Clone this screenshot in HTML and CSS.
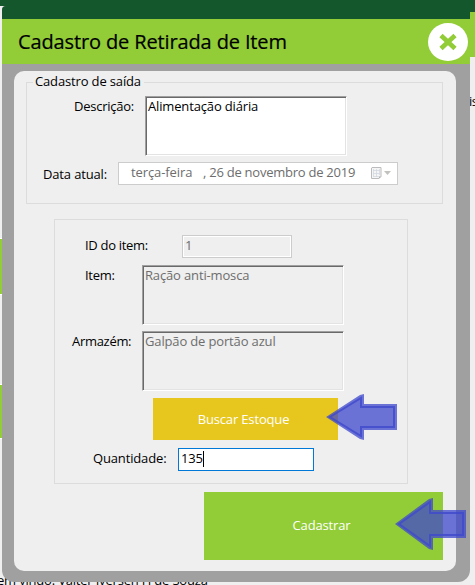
FILE: index.html
```
<!DOCTYPE html>
<html lang="pt-BR">
<head>
<meta charset="utf-8">
<title>Cadastro de Retirada de Item</title>
<link rel="stylesheet" href="styles.css">
</head>
<body>
<div class="backdrop">
  <div class="top-strip"></div>
  <div class="side-bar"></div>
  <div class="edge first"></div>
  <div class="edge second"></div>
  <span class="cut-text">is</span>
  <span class="welcome">em vindo: Valter Iversen H de Souza</span>
</div>
<main class="dialog">
  <div class="frame-top"></div>
  <header class="titlebar">
    <h1>Cadastro de Retirada de Item</h1>
    <svg class="close" viewBox="0 0 40 38"><ellipse cx="20" cy="19" rx="20" ry="19" fill="#fff"/><path d="M13 12.5 27 25.5M27 12.5 13 25.5" stroke="#92cc36" stroke-width="4.6"/></svg>
  </header>
  <section class="panel">
    <div class="group exit">
      <div class="legend">Cadastro de saída</div>
      <div class="row description"><label>Descrição:</label><div class="area white">Alimentação diária</div></div>
      <div class="row date"><label>Data atual:</label>
        <div class="picker"><span class="weekday">terça-feira</span><span class="day">, 26 de novembro de 2019</span>
          <svg class="calendar" width="22" height="13" viewBox="0 0 22 13"><path d="M1 .5h9v9l-2 2H.5V1z" fill="#f5f5f6" stroke="#bcbcbe"/><path d="M2 3.5h7M2 6.5h7M2 9.5h6M2.5 2v8M5.5 2v8M8.5 2v6" stroke="#d3d8e1" stroke-width=".8"/><path d="M8 11.5v-2h2z" fill="#aaa"/><path d="M13 4h7l-3.5 4z" fill="#c2c2bf"/></svg>
        </div>
      </div>
    </div>
    <div class="group stock">
      <div class="row id"><label>ID do item:</label><div class="input disabled">1</div></div>
      <div class="row item"><label>Item:</label><div class="area">Ração anti-mosca</div></div>
      <div class="row store"><label>Armazém:</label><div class="area">Galpão de portão azul</div></div>
      <button class="search">Buscar Estoque</button>
      <div class="row quantity"><label>Quantidade:</label><div class="input focused"><span>135</span><i class="caret"></i></div></div>
    </div>
    <button class="submit">Cadastrar</button>
  </section>
</main>
<svg class="arrow arrow-search" width="71" height="46" viewBox="0 0 71 46"><path class="fill" d="M0 23 34 1 38 0V10H71V36H38V46L34 45Z"/><path class="line" d="M4 23 35 4V13H68V33H35V42Z"/></svg>
<svg class="arrow arrow-submit" width="71" height="52" viewBox="0 0 71 52"><path class="fill" d="M0 26 34 1 38 0V12H71V40H38V52L34 51Z"/><path class="line" d="M4 26 35 4V15H68V37H35V48Z"/></svg>
</body>
</html>
```
FILE: styles.css
```
* { box-sizing: border-box; }
body { margin: 0; width: 475px; height: 585px; overflow: hidden; position: relative; background: #efefef; font: 13px/18px "Open Sans", "Noto Sans", sans-serif; letter-spacing: -.15px; color: #000; }
.backdrop { position: absolute; inset: 0; overflow: hidden; }
.top-strip { position: absolute; left: 0; top: 0; width: 475px; height: 12px; background: linear-gradient(#14572d, #14572d) 0 0 / 100% 6px no-repeat, linear-gradient(#14572d, #14572d) 100% 0 / 20px 12px no-repeat; }
.side-bar { position: absolute; left: 469px; top: 12px; width: 6px; height: 45px; background: #92cc36; }
.edge { position: absolute; left: 0; width: 2px; background: #92cc36; border: solid #fff; border-width: 1px 0; }
.first { top: 238px; height: 57px; }
.second { top: 384px; height: 55px; }
.cut-text { position: absolute; left: 469px; top: 92px; font-size: 13px; letter-spacing: -.5px; }
.welcome { position: absolute; left: -3px; top: 571px; white-space: nowrap; letter-spacing: -.19px; }
.dialog { position: relative; margin: 6px 0 0 2px; width: 468px; height: 576px; background: #a0a0a0; border-radius: 4px 0 12px 12px; overflow: hidden; }
.frame-top { height: 13px; background: #14572d; }
.titlebar { height: 45px; background: #92cc36; display: flex; align-items: center; justify-content: space-between; padding: 0 2px 0 16px; }
h1 { margin: 0; font-size: 20px; line-height: 28px; font-weight: 400; letter-spacing: -.13px; white-space: nowrap; -webkit-text-stroke: .2px; }
.close { width: 40px; height: 38px; margin-top: 1px; }
.panel { margin: 7px 0 0 12px; width: 442px; height: 500px; border-radius: 10px; background: #efefef; padding: 11px 13px 0 12px; }
.group { border: 1px solid #dcdcdc; }
.exit { width: 417px; height: 122px; }
.legend { width: 111px; height: 18px; margin: -11px 0 0 6px; padding-left: 2px; background: #efefef; }
.row { display: flex; }
span, label, .legend { white-space: nowrap; }
label { flex: none; }
.description { margin-top: 6px; padding-left: 47px; }
.description label { width: 71px; padding-top: 1px; letter-spacing: -.25px; }
.area { width: 202px; height: 60px; border: 1px solid; border-color: #a0a0a0 #fff #fff #a0a0a0; box-shadow: inset 1px 1px #696969, inset -1px -1px #e3e3e3; color: #6d6d6d; padding: 0 0 0 2px; }
.area.white { background: #fff; color: #000; }
.date { margin-top: 6px; padding-left: 16px; }
.date label { width: 75px; padding-top: 3px; }
.picker { width: 280px; height: 23px; border: 1px solid #ccc; background: #fff; color: #6d6d6d; display: flex; padding: 0 0 0 12px; letter-spacing: -.25px; }
.weekday { width: 72px; letter-spacing: -.1px; }
.day { width: 168px; }
.calendar { margin-top: 4px; }
.stock { margin: 15px 0 0 28px; width: 354px; height: 265px; padding-top: 15px; }
.input { height: 23px; padding: 0 0 0 2px; display: flex; }
.id { padding-left: 30px; }
.id label { width: 97px; padding-top: 1px; letter-spacing: -.3px; }
.disabled { width: 110px; border: 1px solid #ccc; box-shadow: inset 0 0 0 1px #fff; color: #6d6d6d; }
.item { margin-top: 7px; padding-left: 30px; }
.item label { width: 57px; padding-top: 1px; letter-spacing: -.3px; }
.store { margin-top: 6px; padding-left: 17px; }
.store label { width: 70px; padding-top: 1px; letter-spacing: -.3px; }
button { border: 0; padding: 0; font: inherit; letter-spacing: -.15px; color: #fff; display: block; }
.search { margin: 7px 0 0 98px; width: 185px; height: 42px; padding: 0 4px 1px 0; background: #e7c71e; }
.quantity { margin-top: 8px; padding-left: 38px; }
.quantity label { width: 85px; padding-top: 1px; }
.focused { width: 136px; background: #fff; border: 1px solid #0078d7; }
.caret { width: 1px; height: 16px; margin-top: 2px; background: #000; }
.submit { margin: 8px 0 0 178px; width: 239px; height: 68px; padding: 0 4px 2px 0; background: #92cc36; }
.arrow { position: absolute; overflow: visible; }
.arrow-search { left: 326px; top: 394px; }
.arrow-submit { left: 395px; top: 498px; }
.fill { fill: #3f48cc; fill-opacity: .75; }
.line { fill: none; stroke: #3f48cc; stroke-opacity: .8; stroke-width: 2; }
```
